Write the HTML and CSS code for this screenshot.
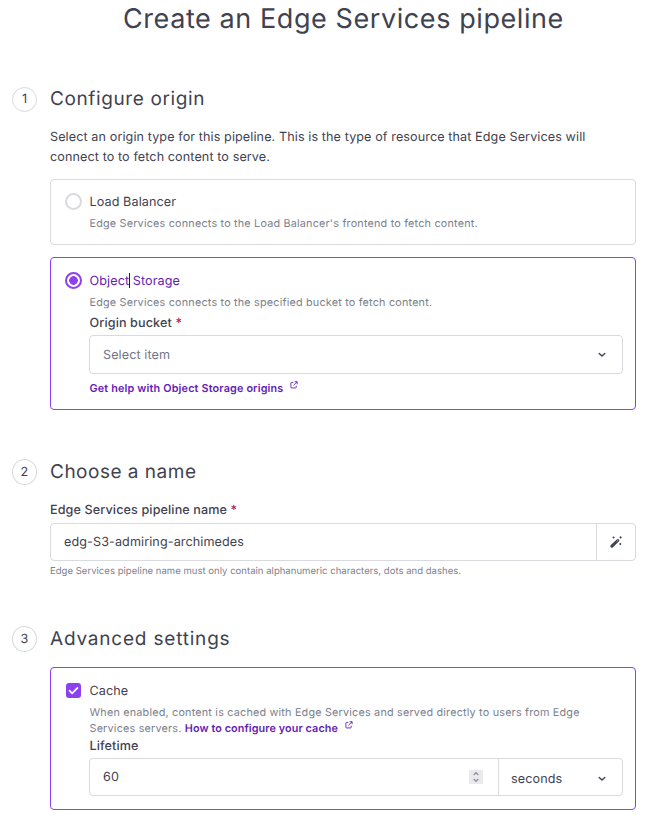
FILE: index.html
```html
<!DOCTYPE html>
<html lang="en">
<head>
<meta charset="utf-8">
<title>Create an Edge Services pipeline</title>
<link rel="stylesheet" href="styles.css">
</head>
<body>
<svg class="defs" aria-hidden="true">
  <symbol id="external" viewBox="0 0 9 9"><path d="M3.7 1.6H1.7Q1 1.6 1 2.3V7.1Q1 7.8 1.7 7.8H6.3Q7 7.8 7 7.1V5.3M5.2 .8H8V3.6M8 .8L3.9 4.9" fill="none" stroke="currentColor"/></symbol>
  <symbol id="chevron" viewBox="0 0 8 6"><path d="M1.2 1.4L4 4.1L6.8 1.4" fill="none" stroke="currentColor" stroke-width="1.4" stroke-linecap="round" stroke-linejoin="round"/></symbol>
</svg>
<main class="page">
  <h1 class="title"><span>Create an Edge Services pipeline</span></h1>

  <section class="step step-origin">
    <span class="number">1</span>
    <div class="content">
      <h2 class="heading h-origin">Configure origin</h2>
      <p class="intro">Select an origin type for this pipeline. This is the type of resource that Edge Services will connect to to fetch content to serve.</p>
      <div class="card card-balancer">
        <span class="radio"></span>
        <div class="body">
          <div class="option">Load Balancer</div>
          <p class="desc">Edge Services connects to the Load Balancer's frontend to fetch content.</p>
        </div>
      </div>
      <div class="card card-storage selected">
        <span class="radio checked"></span>
        <div class="body">
          <div class="option active">Object<span class="caret"></span> Storage</div>
          <p class="desc">Edge Services connects to the specified bucket to fetch content.</p>
          <div class="label">Origin bucket <span class="required">*</span></div>
          <div class="field select"><span class="placeholder">Select item</span><svg class="chevron"><use href="#chevron"/></svg></div>
          <a class="link help">Get help with Object Storage origins<svg class="external"><use href="#external"/></svg></a>
        </div>
      </div>
    </div>
  </section>

  <section class="step step-name">
    <span class="number">2</span>
    <div class="content">
      <h2 class="heading h-name">Choose a name</h2>
      <div class="label name-label">Edge Services pipeline name <span class="required">*</span></div>
      <div class="field name-field">
        <span class="value">edg-S3-admiring-archimedes</span>
        <span class="generate"><svg class="wand" viewBox="0 0 12 12"><path d="M1.9 10.2L7.8 4.5" stroke="currentColor" stroke-width="3" stroke-linecap="round"/><path d="M6.8 5.4L7.8 4.5" stroke="#fff" stroke-width=".8"/><path d="M3.6 .5V2.5M2.6 1.5H4.6M10.6 .3V2.5M9.5 1.4H11.7M10.3 7V9M9.3 8H11.3" stroke="currentColor" stroke-width="1"/></svg></span>
      </div>
      <p class="hint">Edge Services pipeline name must only contain alphanumeric characters, dots and dashes.</p>
    </div>
  </section>

  <section class="step step-advanced">
    <span class="number">3</span>
    <div class="content">
      <h2 class="heading h-advanced">Advanced settings</h2>
      <div class="card card-cache selected">
        <span class="checkbox"><svg viewBox="0 0 15 15"><path d="M3.5 7.7L6.2 10.3L11.5 4.8" fill="none" stroke="#fff" stroke-width="1.7" stroke-linecap="round" stroke-linejoin="round"/></svg></span>
        <div class="body">
          <div class="option">Cache</div>
          <p class="desc">When enabled, content is cached with Edge Services and served directly to users from Edge Services servers. <a class="link">How to configure your cache<svg class="external"><use href="#external"/></svg></a></p>
          <div class="label">Lifetime</div>
          <div class="field lifetime">
            <div class="amount"><span class="amount-value">60</span><svg class="stepper" viewBox="0 0 14 14"><path d="M4.6 5L7 2.7L9.4 5M4.6 9L7 11.3L9.4 9" fill="none" stroke="#92929b" stroke-width="1.3"/></svg></div>
            <div class="unit"><span class="unit-value">seconds</span><svg class="chevron"><use href="#chevron"/></svg></div>
          </div>
        </div>
      </div>
    </div>
  </section>
</main>
</body>
</html>
```

FILE: styles.css
```css
* { box-sizing: border-box; }
body {
  margin: 0;
  background: #fff;
  color: #3f4250;
  font: 400 12.6px/20px Inter, "Liberation Sans", sans-serif;
  letter-spacing: .1px;
  text-rendering: geometricPrecision;
}
h1, h2, p { margin: 0; font-weight: 400; }
svg { display: block; flex: none; }
.defs { position: absolute; width: 0; height: 0; }
.page { width: 668px; height: 834px; overflow: hidden; }
.title { height: 83px; padding-left: 123px; font-size: 27px; line-height: 38px; letter-spacing: .58px; white-space: nowrap; }
.step { display: grid; grid-template-columns: 25px 586px; column-gap: 13px; margin-left: 12px; }
.step-origin { height: 373px; }
.step-name { height: 167px; }
.number {
  display: flex; align-items: center; justify-content: center;
  width: 25px; height: 25px; margin-top: 4px; padding-top: 1px;
  border: 1px solid #d9dadd; border-radius: 50%;
}
.step-name .number, .step-advanced .number { margin-top: 3px; height: 26px; padding-top: 2px; }
.heading { font-size: 19px; line-height: 32px; letter-spacing: .62px; }
.h-name { letter-spacing: .5px; }
.h-advanced { letter-spacing: .8px; }
.intro { margin: 13px 0 11px; }
.card {
  display: grid; grid-template-columns: 17px 1fr; column-gap: 7px;
  padding: 11px 12px 0 14px;
  border: 1px solid #d9dadd; border-radius: 4px;
}
.card-balancer { height: 66px; margin-bottom: 12px; }
.card-storage { height: 153px; padding-top: 12px; }
.card-cache { height: 143px; margin-top: 12px; padding-top: 12px; }
.card.selected { border-color: #8c40ef; }
.radio { width: 17px; height: 17px; margin-top: 2px; border: 2px solid #d9dadd; border-radius: 50%; }
.radio.checked { border-color: #8c40ef; background: radial-gradient(circle, #8c40ef 4px, #fff 4.6px); }
.checkbox { width: 15px; height: 15px; margin: 3px 0 0 1px; border-radius: 3px; background: #8c40ef; }
.option { height: 20px; padding: 2px 0 0 .5px; }
.active { color: #641cb3; }
.caret { display: inline-block; width: 1px; height: 15px; margin-right: -1px; vertical-align: -3px; background: #222; }
.desc { margin-top: 5px; padding-left: .5px; font-size: 10.8px; line-height: 16px; letter-spacing: .2px; color: #7c7f8c; }
.card-cache .desc { padding-right: 36px; }
.label { height: 20px; padding-left: .5px; font-weight: 500; letter-spacing: .12px; }
.card-storage .label { margin: 3px 0 1px; }
.card-cache .label { margin: 0 0 1px; }
.required { color: #b3144d; }
.field { display: flex; align-items: center; border: 1px solid #d9dadd; border-radius: 4px; }
.select { justify-content: space-between; height: 39px; padding: 0 16px 0 13px; }
.placeholder { padding-top: 2px; color: #727683; }
.chevron { width: 8px; height: 6px; }
.link { color: #641cb3; font-weight: 600; font-size: 10.8px; line-height: 16px; letter-spacing: .17px; }
.desc .link { display: inline-block; height: 16px; letter-spacing: .1px; vertical-align: top; }
.help { display: block; margin-top: 7px; padding-left: .5px; }
.external { display: inline-block; width: 8px; height: 8px; margin-left: 7px; vertical-align: 3px; }
.name-label { margin-top: 13px; padding-left: 0; }
.name-field { height: 38px; margin-top: 2px; }
.value { flex: 1; padding: 2px 0 0 13px; }
.generate { display: flex; align-items: center; justify-content: center; width: 39px; height: 100%; border-left: 1px solid #d9dadd; }
.wand { width: 12px; height: 12px; margin-bottom: 1px; }
.hint { margin-top: 3px; font-size: 9.5px; line-height: 16px; letter-spacing: .03px; color: #7c7f8c; }
.lifetime { height: 38px; }
.amount { display: flex; align-items: center; justify-content: space-between; width: 408px; padding: 0 15px 0 13px; }
.amount-value { padding-top: 2px; }
.unit-value { padding-top: 2px; }
.stepper { width: 14px; height: 14px; background: #e9e9ee; }
.unit { display: flex; flex: 1; align-items: center; justify-content: space-between; height: 100%; padding: 3px 16px 0 12px; border-left: 1px solid #d9dadd; }
```
